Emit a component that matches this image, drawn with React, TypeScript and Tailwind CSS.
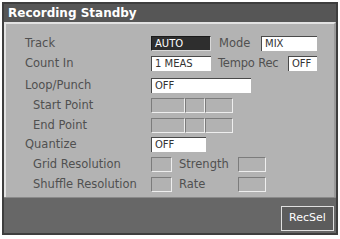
import React from "react";

const font = { fontFamily: '"DejaVu Sans", "Liberation Sans", sans-serif' };

const Field: React.FC<{ w: string; value?: string; dark?: boolean }> = ({ w, value, dark }) => (
  <div
    className={`${w} h-[15px] flex items-center pl-[3px] text-[10px] leading-none border-t border-l ${
      dark
        ? "bg-[#2e2e2e] text-white border-[#1a1a1a] border-r border-b border-r-[#d8d8d8] border-b-[#d8d8d8]"
        : "bg-white text-[#333] border-[#4a4a4a]"
    }`}
  >
    {value}
  </div>
);

const Cell: React.FC<{ w: string }> = ({ w }) => (
  <div className={`${w} h-[15px] bg-[#b2b2b2] border-t border-l border-[#7c7c7c] border-r border-b border-r-[#eeeeee] border-b-[#eeeeee]`} />
);

const Label: React.FC<{ text: string; indent?: boolean; w?: string }> = ({ text, indent, w = "w-[126px]" }) => (
  <div className={`${w} shrink-0 text-[11.5px] leading-[15px] text-[#505050] whitespace-nowrap ${indent ? "pl-[8px]" : ""}`}>{text}</div>
);

export default function App() {
  return (
    <div className="w-[340px] h-[239px] bg-white pt-[2px] pl-[2px]" style={font}>
      <div className="w-[336px] h-[233px] border-2 border-[#3e3e3e] flex flex-col bg-[#b3b3b3]">
        {/* Title */}
        <div className="h-[18px] bg-[#565656] text-white font-bold text-[12px] leading-[18px] pl-[4px]">
          Recording Standby
        </div>

        {/* Body */}
        <div className="h-[175px] border-t-2 border-l-2 border-[#e2e2e2] border-r-2 border-r-[#9a9a9a] pt-[12px] pl-[19px] flex flex-col">
          <div className="h-[20px] flex items-start">
            <Label text="Track" />
            <Field w="w-[60px]" value="AUTO" dark />
            <Label text="Mode" w="w-[50px] pl-[8px]" />
            <Field w="w-[56px]" value="MIX" />
          </div>
          <div className="h-[20px] flex items-start">
            <Label text="Count In" />
            <Field w="w-[60px]" value="1 MEAS" />
            <Label text="Tempo Rec" w="w-[77px] pl-[7px] tracking-[-0.2px]" />
            <Field w="w-[29px]" value="OFF" />
          </div>
          <div className="h-[20px] mt-[2px] flex items-start">
            <Label text="Loop/Punch" />
            <Field w="w-[100px]" value="OFF" />
          </div>
          <div className="h-[20px] flex items-start">
            <Label text="Start Point" indent />
            <Cell w="w-[34px]" />
            <Cell w="w-[20px]" />
            <Cell w="w-[28px]" />
          </div>
          <div className="h-[20px] flex items-start">
            <Label text="End Point" indent />
            <Cell w="w-[34px]" />
            <Cell w="w-[20px]" />
            <Cell w="w-[28px]" />
          </div>
          <div className="h-[20px] flex items-start">
            <Label text="Quantize" />
            <Field w="w-[55px]" value="OFF" />
          </div>
          <div className="h-[20px] flex items-start">
            <Label text="Grid Resolution" indent />
            <Cell w="w-[21px]" />
            <Label text="Strength" w="w-[66px] pl-[7px]" />
            <Cell w="w-[28px]" />
          </div>
          <div className="h-[20px] flex items-start">
            <Label text="Shuffle Resolution" indent />
            <Cell w="w-[21px]" />
            <Label text="Rate" w="w-[66px] pl-[7px]" />
            <Cell w="w-[28px]" />
          </div>
        </div>

        {/* Bottom bar */}
        <div className="h-[36px] bg-[#676767] border-t border-[#8a8a8a] flex justify-end items-end pr-[2px] pb-[2px]">
          <div className="w-[53px] h-[25px] bg-[#5c5c5c] border border-[#e0e0e0] text-white text-[11px] flex items-center justify-center">
            RecSel
          </div>
        </div>
      </div>
    </div>
  );
}
